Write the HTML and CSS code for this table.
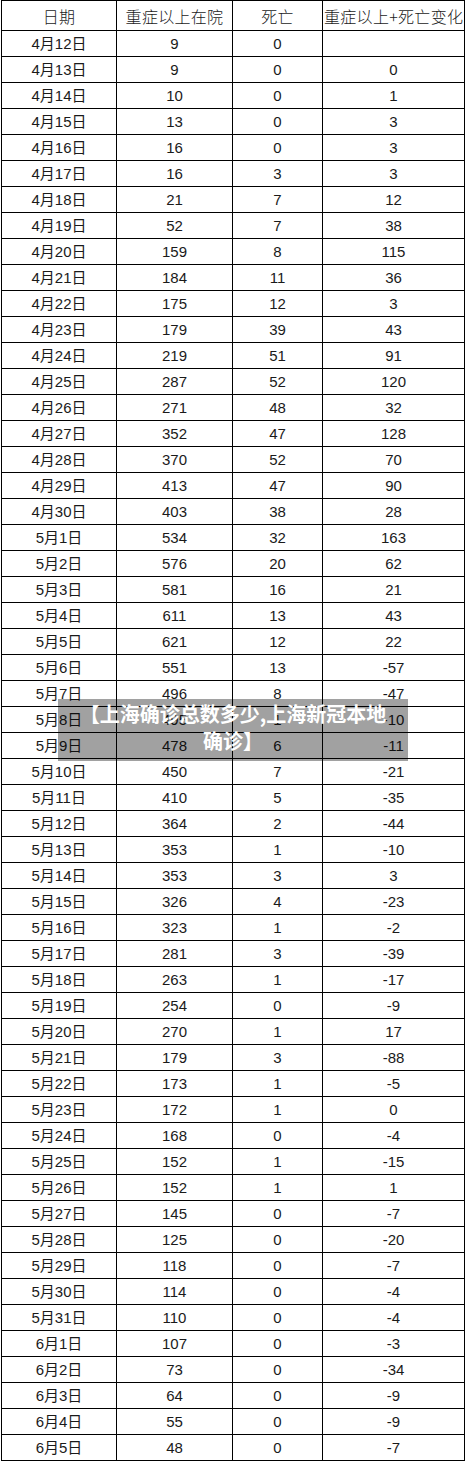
FILE: index.html
```html
<!DOCTYPE html>
<html lang="zh">
<head>
<meta charset="utf-8">
<title>上海确诊</title>
<link rel="stylesheet" href="styles.css">
</head>
<body>
<div class="page">
<table class="data">
<colgroup><col class="c1"><col class="c2"><col class="c3"><col class="c4"></colgroup>
<thead>
<tr class="head"><th>日期</th><th>重症以上在院</th><th>死亡</th><th class="wide"><span>重症以上+死亡变化</span></th></tr>
</thead>
<tbody id="rows">
<tr><td>4月12日</td><td>9</td><td>0</td><td></td></tr>
<tr><td>4月13日</td><td>9</td><td>0</td><td>0</td></tr>
<tr><td>4月14日</td><td>10</td><td>0</td><td>1</td></tr>
<tr><td>4月15日</td><td>13</td><td>0</td><td>3</td></tr>
<tr><td>4月16日</td><td>16</td><td>0</td><td>3</td></tr>
<tr><td>4月17日</td><td>16</td><td>3</td><td>3</td></tr>
<tr><td>4月18日</td><td>21</td><td>7</td><td>12</td></tr>
<tr><td>4月19日</td><td>52</td><td>7</td><td>38</td></tr>
<tr><td>4月20日</td><td>159</td><td>8</td><td>115</td></tr>
<tr><td>4月21日</td><td>184</td><td>11</td><td>36</td></tr>
<tr><td>4月22日</td><td>175</td><td>12</td><td>3</td></tr>
<tr><td>4月23日</td><td>179</td><td>39</td><td>43</td></tr>
<tr><td>4月24日</td><td>219</td><td>51</td><td>91</td></tr>
<tr><td>4月25日</td><td>287</td><td>52</td><td>120</td></tr>
<tr><td>4月26日</td><td>271</td><td>48</td><td>32</td></tr>
<tr><td>4月27日</td><td>352</td><td>47</td><td>128</td></tr>
<tr><td>4月28日</td><td>370</td><td>52</td><td>70</td></tr>
<tr><td>4月29日</td><td>413</td><td>47</td><td>90</td></tr>
<tr><td>4月30日</td><td>403</td><td>38</td><td>28</td></tr>
<tr><td>5月1日</td><td>534</td><td>32</td><td>163</td></tr>
<tr><td>5月2日</td><td>576</td><td>20</td><td>62</td></tr>
<tr><td>5月3日</td><td>581</td><td>16</td><td>21</td></tr>
<tr><td>5月4日</td><td>611</td><td>13</td><td>43</td></tr>
<tr><td>5月5日</td><td>621</td><td>12</td><td>22</td></tr>
<tr><td>5月6日</td><td>551</td><td>13</td><td>-57</td></tr>
<tr><td>5月7日</td><td>496</td><td>8</td><td>-47</td></tr>
<tr><td>5月8日</td><td>495</td><td>1</td><td>-10</td></tr>
<tr><td>5月9日</td><td>478</td><td>6</td><td>-11</td></tr>
<tr><td>5月10日</td><td>450</td><td>7</td><td>-21</td></tr>
<tr><td>5月11日</td><td>410</td><td>5</td><td>-35</td></tr>
<tr><td>5月12日</td><td>364</td><td>2</td><td>-44</td></tr>
<tr><td>5月13日</td><td>353</td><td>1</td><td>-10</td></tr>
<tr><td>5月14日</td><td>353</td><td>3</td><td>3</td></tr>
<tr><td>5月15日</td><td>326</td><td>4</td><td>-23</td></tr>
<tr><td>5月16日</td><td>323</td><td>1</td><td>-2</td></tr>
<tr><td>5月17日</td><td>281</td><td>3</td><td>-39</td></tr>
<tr><td>5月18日</td><td>263</td><td>1</td><td>-17</td></tr>
<tr><td>5月19日</td><td>254</td><td>0</td><td>-9</td></tr>
<tr><td>5月20日</td><td>270</td><td>1</td><td>17</td></tr>
<tr><td>5月21日</td><td>179</td><td>3</td><td>-88</td></tr>
<tr><td>5月22日</td><td>173</td><td>1</td><td>-5</td></tr>
<tr><td>5月23日</td><td>172</td><td>1</td><td>0</td></tr>
<tr><td>5月24日</td><td>168</td><td>0</td><td>-4</td></tr>
<tr><td>5月25日</td><td>152</td><td>1</td><td>-15</td></tr>
<tr><td>5月26日</td><td>152</td><td>1</td><td>1</td></tr>
<tr><td>5月27日</td><td>145</td><td>0</td><td>-7</td></tr>
<tr><td>5月28日</td><td>125</td><td>0</td><td>-20</td></tr>
<tr><td>5月29日</td><td>118</td><td>0</td><td>-7</td></tr>
<tr><td>5月30日</td><td>114</td><td>0</td><td>-4</td></tr>
<tr><td>5月31日</td><td>110</td><td>0</td><td>-4</td></tr>
<tr><td>6月1日</td><td>107</td><td>0</td><td>-3</td></tr>
<tr><td>6月2日</td><td>73</td><td>0</td><td>-34</td></tr>
<tr><td>6月3日</td><td>64</td><td>0</td><td>-9</td></tr>
<tr><td>6月4日</td><td>55</td><td>0</td><td>-9</td></tr>
<tr><td>6月5日</td><td>48</td><td>0</td><td>-7</td></tr>
</tbody>
</table>
<div class="caption">【上海确诊总数多少,上海新冠本地确诊】</div>
</div>
</body>
</html>
```
FILE: styles.css
```css
html, body {
  margin: 0;
  padding: 0;
  background: #ffffff;
}
.page {
  position: relative;
  width: 467px;
  height: 1461px;
  overflow: hidden;
  padding-left: 1px;
  box-sizing: border-box;
}
.data {
  border-collapse: collapse;
  table-layout: fixed;
  width: 464px;
  font-family: "Liberation Sans", "Noto Sans CJK SC", sans-serif;
  font-size: 15px;
  color: #1a1a1a;
}
.c1 { width: 115px; }
.c2 { width: 116px; }
.c3 { width: 90px; }
.c4 { width: 142px; }
.data th, .data td {
  border: 1px solid #000;
  padding: 0;
  text-align: center;
  vertical-align: middle;
  white-space: nowrap;
  overflow: hidden;
}
.data td {
  height: 24px;
  line-height: 24px;
  padding-top: 1px;
}
.data th {
  height: 29px;
  font-family: "Noto Sans CJK SC", sans-serif;
  font-size: 16px;
  font-weight: 300;
  letter-spacing: 0.3px;
}
.data th.wide {
  text-align: left;
  padding-left: 1px;
}
.data th.wide span {
  display: block;
  width: 150px;
}
.caption {
  position: absolute;
  left: 58px;
  top: 699px;
  width: 350px;
  height: 62px;
  box-sizing: border-box;
  padding: 1px 18px 0;
  background: rgba(0, 0, 0, 0.37);
  color: #ffffff;
  font-family: "Noto Sans CJK SC", sans-serif;
  font-weight: 700;
  font-size: 20px;
  line-height: 27px;
  text-align: center;
}
```
